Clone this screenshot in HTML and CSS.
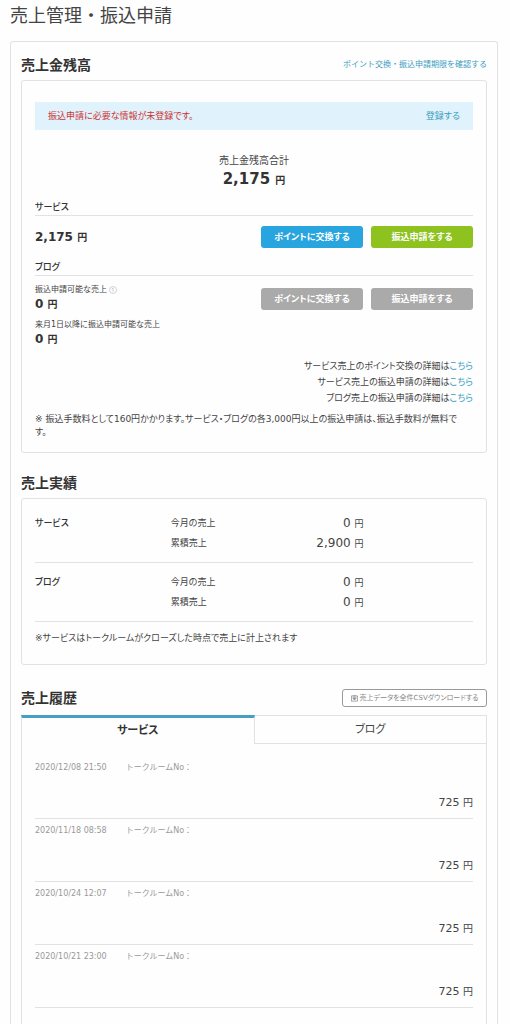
FILE: index.html
```html
<!DOCTYPE html>
<html lang="ja">
<head>
  <meta charset="UTF-8">
  <meta name="viewport" content="width=device-width, initial-scale=1">
  <title>売上管理・振込申請</title>
  <link rel="stylesheet" href="styles.css">
</head>
<body>
  <h1 class="page-title">売上管理・振込申請</h1>

  <main class="panel">

    <!-- Balance -->
    <section>
      <div class="section-head">
        <h2>売上金残高</h2>
        <a class="deadline-link" href="#">ポイント交換・振込申請期限を確認する</a>
      </div>
      <div class="box balance">
        <div class="notice">
          <span>振込申請に必要な情報が未登録です。</span>
          <a href="#">登録する</a>
        </div>

        <div class="total">
          <p class="total-label">売上金残高合計</p>
          <p class="total-value">2,175 <small>円</small></p>
        </div>

        <h3 class="sub-title">サービス</h3>
        <div class="balance-row">
          <p class="price">2,175 <small>円</small></p>
          <div class="actions">
            <button type="button" class="btn btn-blue">ポイントに交換する</button>
            <button type="button" class="btn btn-green">振込申請をする</button>
          </div>
        </div>

        <h3 class="sub-title blog-title">ブログ</h3>
        <div class="blog-row">
          <div class="blog-amounts">
            <div>
              <p class="price-label">振込申請可能な売上
                <svg class="info-icon" viewBox="0 0 16 16" aria-hidden="true">
                  <circle cx="8" cy="8" r="7" />
                  <path d="M5.5 6.5 8 4v8" />
                </svg>
              </p>
              <p class="price">0 <small>円</small></p>
            </div>
            <div>
              <p class="price-label">来月1日以降に振込申請可能な売上</p>
              <p class="price">0 <small>円</small></p>
            </div>
          </div>
          <div class="actions">
            <button type="button" class="btn" disabled>ポイントに交換する</button>
            <button type="button" class="btn" disabled>振込申請をする</button>
          </div>
        </div>

        <ul class="details">
          <li>サービス売上のポイント交換の詳細は<a href="#">こちら</a></li>
          <li>サービス売上の振込申請の詳細は<a href="#">こちら</a></li>
          <li>ブログ売上の振込申請の詳細は<a href="#">こちら</a></li>
        </ul>
        <p class="note">※ 振込手数料として160円かかります。サービス・ブログの各3,000円以上の振込申請は、振込手数料が無料です。</p>
      </div>
    </section>

    <!-- Results -->
    <section class="results">
      <div class="section-head">
        <h2>売上実績</h2>
      </div>
      <div class="box results-box">
        <table>
          <tbody>
            <tr>
              <th rowspan="2" scope="rowgroup">サービス</th>
              <td>今月の売上</td>
              <td class="amount">0 <small>円</small></td>
              <td class="spacer"></td>
            </tr>
            <tr>
              <td>累積売上</td>
              <td class="amount">2,900 <small>円</small></td>
              <td class="spacer"></td>
            </tr>
          </tbody>
          <tbody>
            <tr>
              <th rowspan="2" scope="rowgroup">ブログ</th>
              <td>今月の売上</td>
              <td class="amount">0 <small>円</small></td>
              <td class="spacer"></td>
            </tr>
            <tr>
              <td>累積売上</td>
              <td class="amount">0 <small>円</small></td>
              <td class="spacer"></td>
            </tr>
          </tbody>
        </table>
        <p class="note">※サービスはトークルームがクローズした時点で売上に計上されます</p>
      </div>
    </section>

    <!-- History -->
    <section class="history">
      <div class="section-head">
        <h2>売上履歴</h2>
        <button type="button" class="csv-btn">
          <svg viewBox="0 0 16 16" aria-hidden="true">
            <path d="M4 2H1v12h14V2h-3M5 1h6v8H5zM8 3v8M5 8l3 3 3-3" />
          </svg>
          売上データを全件CSVダウンロードする
        </button>
      </div>
      <div class="tabs" role="tablist">
        <button type="button" class="tab active" role="tab" aria-selected="true">サービス</button>
        <button type="button" class="tab" role="tab" aria-selected="false">ブログ</button>
      </div>
      <ul class="history-list">
        <li>
          <p class="meta"><time>2020/12/08 21:50</time><span>トークルームNo：</span></p>
          <p class="sale">725 <small>円</small></p>
        </li>
        <li>
          <p class="meta"><time>2020/11/18 08:58</time><span>トークルームNo：</span></p>
          <p class="sale">725 <small>円</small></p>
        </li>
        <li>
          <p class="meta"><time>2020/10/24 12:07</time><span>トークルームNo：</span></p>
          <p class="sale">725 <small>円</small></p>
        </li>
        <li>
          <p class="meta"><time>2020/10/21 23:00</time><span>トークルームNo：</span></p>
          <p class="sale">725 <small>円</small></p>
        </li>
      </ul>
    </section>
  </main>
</body>
</html>
```

FILE: styles.css
```css
* {
  box-sizing: border-box;
}

body {
  display: flex;
  flex-direction: column;
  min-height: 100vh;
  margin: 0;
  padding: 0 12px 0 10px;
  background: #fefefe;
  color: #444;
  font-family: "DejaVu Sans", "Noto Sans CJK JP", sans-serif;
  font-size: 9px;
  line-height: 16px;
  font-feature-settings: "palt";
}

h1, h2, h3, p, ul {
  margin: 0;
  padding: 0;
}

ul {
  list-style: none;
}

a {
  color: #3a9dbf;
  text-decoration: none;
}

small {
  font-size: 10px;
  line-height: 1;
}

button {
  font: inherit;
  font-feature-settings: inherit;
  cursor: pointer;
}

.page-title {
  margin-bottom: 10px;
  font-size: 18px;
  font-weight: normal;
  line-height: 31px;
  font-feature-settings: normal;
}

/* Panel */
.panel {
  display: flex;
  flex-direction: column;
  flex: 1;
  padding: 11px 10px 0;
  border: 1px solid #e2e2e2;
  border-bottom: 0;
  border-radius: 3px 3px 0 0;
}

.section-head {
  display: flex;
  justify-content: space-between;
  align-items: center;
  height: 24px;
  margin-bottom: 3px;
}

.section-head h2 {
  color: #333;
  font-size: 14px;
  font-weight: bold;
}

.deadline-link {
  font-size: 8px;
  font-feature-settings: normal;
}

.box {
  padding: 0 13px;
  border: 1px solid #e2e2e2;
  border-radius: 3px;
}

/* Balance */
.balance {
  padding-top: 21px;
  padding-bottom: 13px;
}

.notice {
  display: flex;
  justify-content: space-between;
  align-items: center;
  height: 28px;
  padding: 0 13px;
  background: #e0f2fb;
  color: #c33;
}

.total {
  margin: 23px 0 10px;
  text-align: center;
}

.total-label {
  font-size: 10px;
}

.total-value {
  color: #333;
  font-size: 15px;
  font-weight: bold;
  line-height: 20px;
}

.sub-title {
  border-bottom: 1px solid #e2e2e2;
  color: #333;
  font-size: 9px;
  font-weight: 500;
}

.blog-title {
  margin-top: 11px;
}

.balance-row,
.blog-row {
  display: flex;
  justify-content: space-between;
}

.balance-row {
  align-items: center;
  margin-top: 10px;
}

.blog-row {
  padding-top: 8px;
}

.blog-row .actions {
  margin-top: 4px;
}

.blog-amounts {
  display: flex;
  flex-direction: column;
  gap: 7px;
}

.price {
  color: #333;
  font-size: 12px;
  font-weight: bold;
}

.price-label {
  display: flex;
  align-items: center;
  gap: 2px;
  font-size: 8px;
  line-height: 12px;
  font-feature-settings: normal;
}

.info-icon {
  width: 8px;
  height: 8px;
  fill: none;
  stroke: #aaa;
}

.actions {
  display: flex;
  gap: 8px;
}

.btn {
  width: 102px;
  height: 22px;
  padding: 0;
  border: 0;
  border-radius: 3px;
  color: #fff;
  font-weight: bold;
}

.btn-blue {
  background: #28a5df;
}

.btn-green {
  background: #8dc21f;
}

.btn:disabled {
  background: #aaa;
  cursor: default;
}

.details {
  margin-top: 11px;
  text-align: right;
}

.note {
  margin-top: 7px;
  padding-right: 12px;
  line-height: 13px;
}

/* Results */
.results {
  margin-top: 18px;
}

.results-box {
  padding-top: 5px;
  padding-bottom: 19px;
}

.results table {
  width: 100%;
  border-collapse: collapse;
  table-layout: fixed;
}

.results tbody {
  border-bottom: 1px solid #e2e2e2;
}

.results th,
.results td {
  padding: 0;
  line-height: 20px;
  text-align: left;
  vertical-align: top;
}

.results th {
  width: 31%;
  color: #333;
  font-weight: 500;
}

.results tr:first-child > * {
  padding-top: 9px;
}

.results tr:last-child > * {
  padding-bottom: 9px;
}

.results .amount {
  font-size: 12px;
  text-align: right;
}

.results .amount small {
  font-size: 9px;
}

.results .spacer {
  width: 25%;
}

.results .note {
  margin-top: 10px;
}

/* History */
.history {
  display: flex;
  flex-direction: column;
  flex: 1;
  margin-top: 21px;
}

.history .section-head {
  margin-bottom: 5px;
}

.csv-btn {
  display: flex;
  justify-content: center;
  align-items: center;
  gap: 2px;
  width: 145px;
  height: 18px;
  padding: 0;
  border: 1px solid #999;
  border-radius: 3px;
  background: #fff;
  color: #888;
  font-size: 7px;
  white-space: nowrap;
}

.csv-btn svg {
  width: 7px;
  height: 7px;
  fill: none;
  stroke: #777;
  stroke-width: 1.5;
}

.tabs {
  display: flex;
  height: 29px;
}

.tab {
  flex: 1;
  padding: 0;
  border: 1px solid #e2e2e2;
  border-left: 0;
  background: none;
  color: #444;
  font-size: 11px;
}

.tab.active {
  border-top: 3px solid #46a0c6;
  border-bottom: 0;
  border-left: 1px solid #e2e2e2;
  color: #333;
  font-weight: bold;
}

.history-list {
  flex: 1;
  padding: 12px 13px 0;
  border: 1px solid #e2e2e2;
  border-width: 0 1px;
}

.history-list li {
  padding: 6px 0 5px;
  border-bottom: 1px solid #e2e2e2;
}

.meta {
  display: flex;
  gap: 19px;
  margin-bottom: 19px;
  color: #999;
  font-size: 8px;
  line-height: 12px;
  font-feature-settings: normal;
}

.sale {
  font-size: 11px;
  line-height: 20px;
  text-align: right;
}
```
